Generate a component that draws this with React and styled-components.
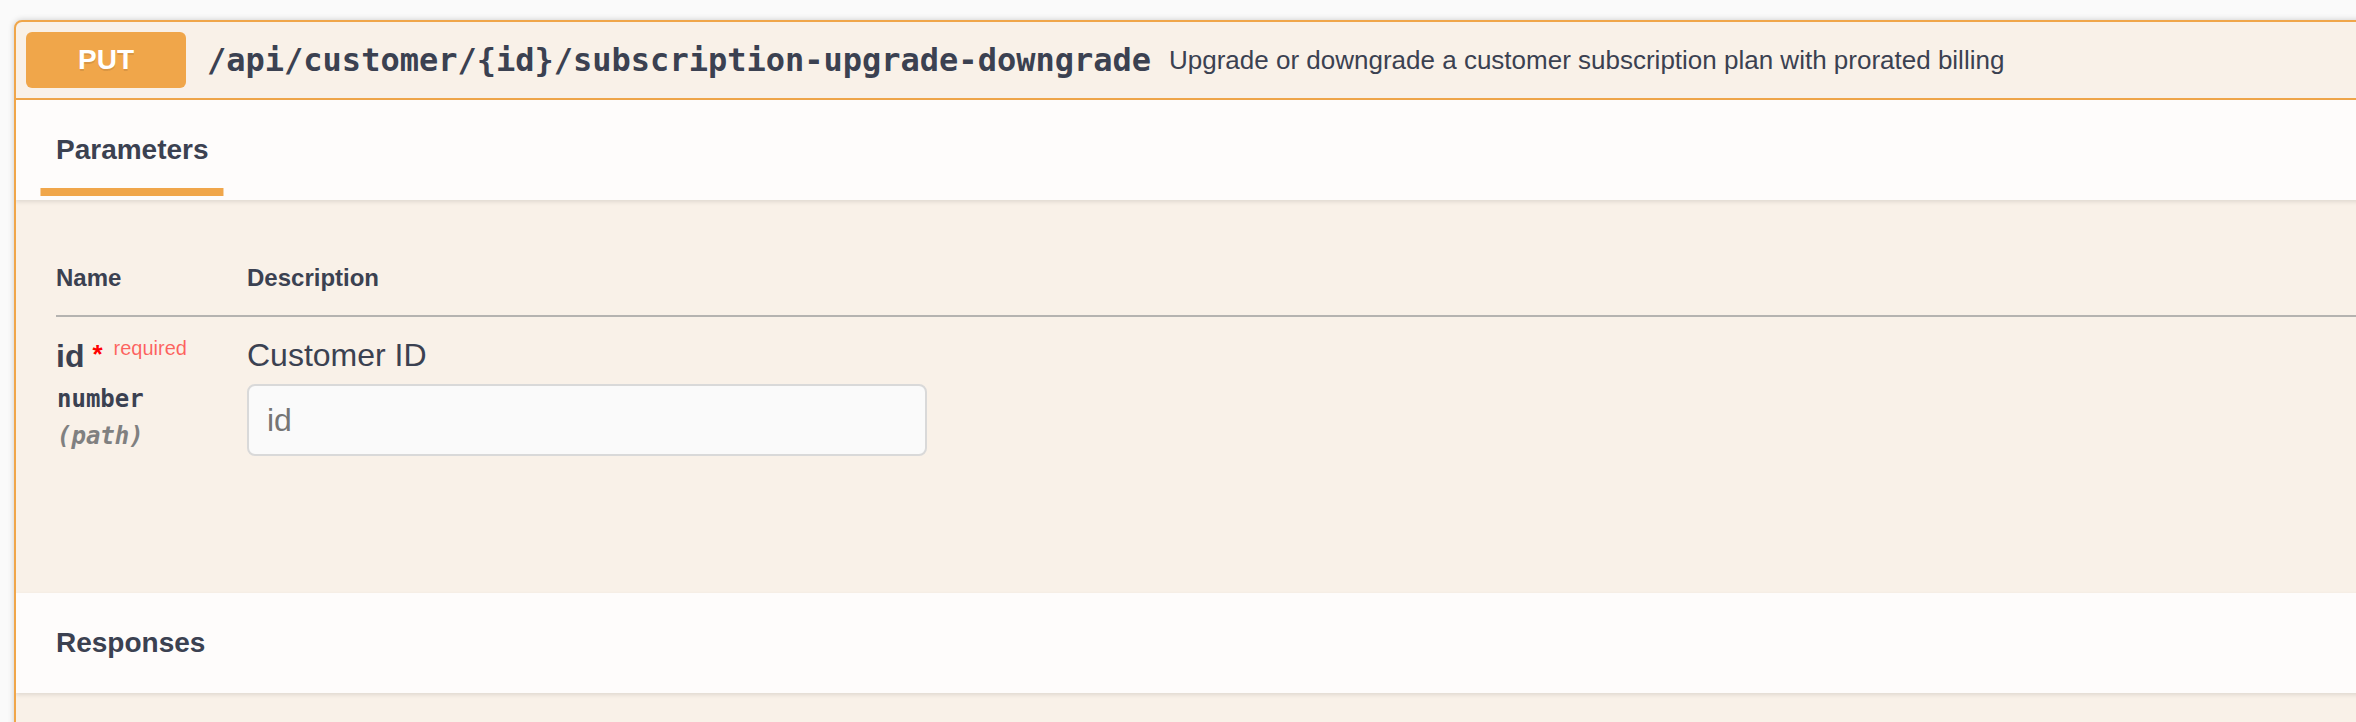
import React from 'react'
import styled, { createGlobalStyle } from 'styled-components';

const accent = '#f0a64a';
const ink = '#3b4151';

const Global = createGlobalStyle`
  html, body {
    margin: 0;
    padding: 0;
    background: #fafafa;
    overflow: hidden;
  }
  body {
    font-family: "Liberation Sans", Arial, sans-serif;
    color: ${ink};
  }
`;

const Page = styled.div`
  padding: 20px 0 0 14px;
  width: 2400px;
`;

const OpBlock = styled.div`
  border: 2px solid ${accent};
  border-radius: 8px;
  background: #f9f1e8;
  box-shadow: 0 0 6px rgba(0, 0, 0, 0.19);
  overflow: hidden;
  min-height: 760px;
`;

const Summary = styled.div`
  display: flex;
  align-items: center;
  padding: 10px;
  border-bottom: 2px solid ${accent};
`;

const Method = styled.span`
  min-width: 160px;
  padding: 12px 0;
  border-radius: 6px;
  background: ${accent};
  color: #fff;
  font-size: 28px;
  font-weight: 700;
  line-height: 32px;
  text-align: center;
  text-shadow: 0 2px 0 rgba(0, 0, 0, 0.1);
`;

const Path = styled.span`
  padding: 0 18px 0 21px;
  font-family: "DejaVu Sans Mono", "Liberation Mono", monospace;
  font-size: 32px;
  font-weight: 700;
  color: ${ink};
`;

const SummaryDescription = styled.span`
  font-size: 26px;
  color: ${ink};
`;

const SectionHeader = styled.div`
  display: flex;
  align-items: center;
  min-height: 100px;
  padding: 0 40px;
  background: rgba(255, 255, 255, 0.8);
  box-shadow: 0 2px 4px rgba(0, 0, 0, 0.1);
  box-sizing: border-box;
`;

const TabTitle = styled.h4`
  position: relative;
  margin: 0;
  font-size: 28px;
  font-weight: 700;
  color: ${ink};
  &::after {
    content: "";
    position: absolute;
    left: 50%;
    bottom: -30px;
    transform: translateX(-50%);
    width: 120%;
    height: 8px;
    background: ${accent};
  }
`;

const SectionTitle = styled.h4`
  margin: 0;
  font-size: 28px;
  font-weight: 700;
  color: ${ink};
`;

const TableWrap = styled.div`
  padding: 40px 0 107px 40px;
`;

const Table = styled.table`
  width: 100%;
  border-collapse: collapse;
`;

const Th = styled.th`
  width: ${p => p.$w || 'auto'};
  padding: 24px 0 23px 0;
  text-align: left;
  font-size: 24px;
  font-weight: 700;
  color: ${ink};
  border-bottom: 2px solid #b5b3b0;
`;

const Td = styled.td`
  padding: 20px 0;
  vertical-align: top;
`;

const ParamName = styled.div`
  padding-top: 1px;
  font-size: 32px;
  font-weight: 700;
  color: ${ink};
  white-space: nowrap;
`;

const Star = styled.span`
  color: #f00;
  font-size: 26px;
  margin-left: 8px;
  position: relative;
  top: -4px;
`;

const Required = styled.span`
  font-size: 20px;
  font-weight: 400;
  color: rgba(255, 0, 0, 0.6);
  position: relative;
  top: -12px;
  margin-left: 11px;
`;

const ParamType = styled.div`
  padding: ${p => (p.$italic ? '9px' : '10px')} 0 0 1px;
  font-family: "DejaVu Sans Mono", "Liberation Mono", monospace;
  font-size: 24px;
  font-weight: 700;
  font-style: ${p => (p.$italic ? 'italic' : 'normal')};
  color: ${p => (p.$muted ? '#808080' : ink)};
`;

const DescText = styled.p`
  margin: 0;
  font-size: 32px;
  color: ${ink};
`;

const Input = styled.input`
  display: block;
  box-sizing: border-box;
  width: 680px;
  height: 72px;
  margin: 10px 0;
  padding: 0 18px;
  border: 2px solid #d9d9d9;
  border-radius: 8px;
  background: #fafafa;
  font-family: "Liberation Sans", Arial, sans-serif;
  font-size: 32px;
  color: ${ink};
  outline: none;
  &::placeholder {
    color: #757575;
  }
`;

export default function App() {
  return (
    <>
      <Global />
      <Page>
        <OpBlock>
          <Summary>
            <Method>PUT</Method>
            <Path>/api/customer/&#123;id&#125;/subscription-upgrade-downgrade</Path>
            <SummaryDescription>
              Upgrade or downgrade a customer subscription plan with prorated billing
            </SummaryDescription>
          </Summary>

          <SectionHeader>
            <TabTitle>Parameters</TabTitle>
          </SectionHeader>

          <TableWrap>
            <Table>
              <thead>
                <tr>
                  <Th $w="191px">Name</Th>
                  <Th>Description</Th>
                </tr>
              </thead>
              <tbody>
                <tr>
                  <Td>
                    <ParamName>
                      id<Star>*</Star>
                      <Required>required</Required>
                    </ParamName>
                    <ParamType>number</ParamType>
                    <ParamType $italic $muted>(path)</ParamType>
                  </Td>
                  <Td>
                    <DescText>Customer ID</DescText>
                    <Input type="text" placeholder="id" />
                  </Td>
                </tr>
              </tbody>
            </Table>
          </TableWrap>

          <SectionHeader>
            <SectionTitle>Responses</SectionTitle>
          </SectionHeader>
        </OpBlock>
      </Page>
    </>
  );
}
